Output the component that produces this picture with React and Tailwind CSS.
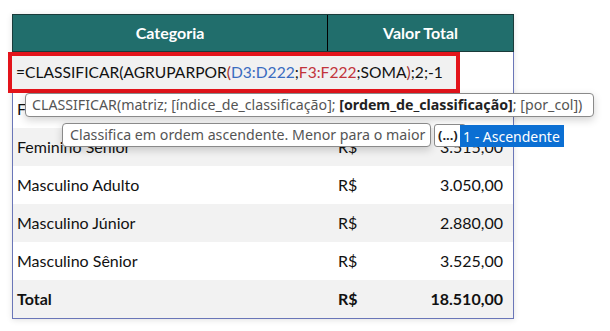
import React from 'react';

const CELL_FONT = "font-['Lato','Liberation_Sans',sans-serif]";
const UI_FONT = "font-['Noto_Sans','Open_Sans',sans-serif]";

const rows = [
  { name: '', currency: '', value: '', shade: false },
  { name: 'Feminino Adulto', currency: 'R$', value: '5.540,00', shade: false },
  { name: 'Feminino Sênior', currency: 'R$', value: '3.515,00', shade: true },
  { name: 'Masculino Adulto', currency: 'R$', value: '3.050,00', shade: false },
  { name: 'Masculino Júnior', currency: 'R$', value: '2.880,00', shade: true },
  { name: 'Masculino Sênior', currency: 'R$', value: '3.525,00', shade: false },
];

const Row = ({ row, bold }) => (
  <div
    className={`flex h-[38px] items-center ${row.shade ? 'bg-[#f2f2f2]' : 'bg-white'} ${bold ? 'font-bold' : ''}`}
  >
    <div className="w-[316px] pl-[4px]">{row.name}</div>
    <div className="flex flex-1 items-center justify-between pl-[9px] pr-[10px]">
      <span>{row.currency}</span>
      <span>{row.value}</span>
    </div>
  </div>
);

const App = () => {
  return (
    <div className={`relative h-[331px] w-[610px] overflow-hidden bg-white ${CELL_FONT} text-[16px] text-[#111]`}>
      <div className="pl-[12px] pt-[14px]">
        <div className="w-[502px] shadow-[0_1px_6px_rgba(0,0,0,0.12)]">
          {/* header */}
          <div className="flex h-[38px] items-center border border-[#1a3b3a] bg-[#216e6c] font-bold text-white">
            <div className="flex h-full w-[315px] items-center justify-center border-r border-black">Categoria</div>
            <div className="flex flex-1 items-center justify-center">Valor Total</div>
          </div>
          <div className="border-x border-b border-[#6a76b8]">
            {rows.map((r, i) => (
              <Row key={i} row={r} />
            ))}
            <Row row={{ name: 'Total', currency: 'R$', value: '18.510,00', shade: true }} bold />
          </div>
        </div>
      </div>

      {/* in-cell formula editor */}
      <div className="absolute left-[8px] top-[52px] flex h-[41px] w-[452px] items-center whitespace-nowrap border-4 border-[#e3141b] bg-[#f1f1f1] pl-[4px] text-[15.6px] text-[#111]">
        <span>=CLASSIFICAR(AGRUPARPOR</span>
        <span className="text-[#a3332c]">(</span>
        <span className="text-[#3a6cc0]">D3:D222</span>
        <span>;</span>
        <span className="text-[#c2343c]">F3:F222</span>
        <span>;SOMA</span>
        <span className="text-[#a3332c]">)</span>
        <span>;2;-1</span>
      </div>

      {/* syntax tooltip */}
      <div className={`absolute left-[25px] top-[93px] flex h-[24px] w-[569px] items-center whitespace-nowrap rounded-[4px] border border-[#8a8a8a] bg-white pl-[6px] ${UI_FONT} text-[14.2px] text-[#555] shadow-[0_3px_8px_rgba(0,0,0,0.18)]`}>
        <span>CLASSIFICAR(matriz; [índice_de_classificação];&nbsp;</span>
        <span className="font-bold text-[#222]">[ordem_de_classificação]</span>
        <span>; [por_col])</span>
      </div>

      {/* argument description */}
      <div className={`absolute left-[62px] top-[123px] flex h-[24px] w-[369px] items-center whitespace-nowrap rounded-[4px] border border-[#8a8a8a] bg-white pl-[7px] ${UI_FONT} text-[14.2px] text-[#555] shadow-[0_3px_8px_rgba(0,0,0,0.18)]`}>
        Classifica em ordem ascendente. Menor para o maior
      </div>

      {/* options list */}
      <div className={`absolute left-[434px] top-[124px] flex h-[23px] w-[32px] items-center rounded-[3px] border border-[#8a8a8a] bg-white pl-[3px] ${UI_FONT} text-[13px] font-bold text-[#222]`}>
        (...)
      </div>
      <div className={`absolute left-[460px] top-[125px] flex h-[22px] w-[104px] items-center whitespace-nowrap bg-[#0b6fd3] pl-[3px] ${UI_FONT} text-[14px] text-white`}>
        1 - Ascendente
      </div>
    </div>
  );
};

export default App;
